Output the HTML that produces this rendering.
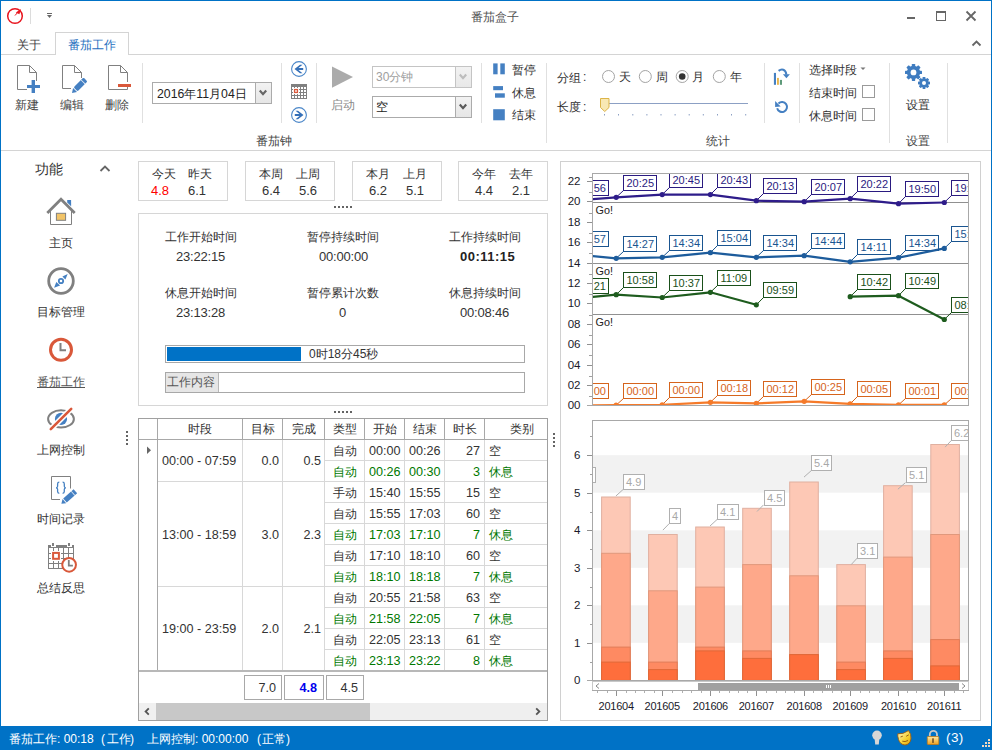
<!DOCTYPE html>
<html><head><meta charset="utf-8">
<style>
*{box-sizing:border-box}
html,body{margin:0;padding:0}
body{width:992px;height:750px;position:relative;overflow:hidden;background:#fff;font-family:"Liberation Sans",sans-serif;font-size:12px;color:#333}
.a{position:absolute;white-space:nowrap;line-height:14px}
.ln{position:absolute;background:#d4d4d4}
.box{position:absolute;border:1px solid #d6d6d6;background:#fff}
svg{position:absolute;overflow:visible}
.lbl{color:#444}
.num{font-size:12.6px}
</style></head><body>
<!-- window border -->
<div class="ln" style="left:0;top:0;width:992px;height:1px;background:#0072c6"></div>
<div class="ln" style="left:0;top:0;width:1px;height:750px;background:#0072c6"></div>
<div class="ln" style="left:991px;top:0;width:1px;height:750px;background:#0072c6"></div>

<!-- title bar -->
<svg style="left:0;top:0" width="60" height="32">
  <circle cx="15" cy="16" r="7.3" fill="none" stroke="#e8141e" stroke-width="1.5"/>
  <path d="M15 15.5 L18.5 11.5" stroke="#e8141e" stroke-width="1"/>
  <path d="M21 9 L15.8 12.4 L19.4 14.2 Z" fill="#e8141e"/>
  <rect x="30" y="8" width="1" height="16" fill="#dcdcdc"/>
  <rect x="47" y="13" width="5" height="1" fill="#666"/>
  <path d="M47 15 L52 15 L49.5 18 Z" fill="#666"/>
</svg>
<div class="a lbl" style="left:471px;top:10px;font-size:12px;color:#505050">番茄盒子</div>
<svg style="left:900px;top:5px" width="90" height="25">
  <rect x="7" y="12" width="8" height="2" fill="#666"/>
  <rect x="36.5" y="6.5" width="9" height="9" fill="none" stroke="#666" stroke-width="1"/>
  <rect x="36" y="6" width="10" height="2" fill="#666"/>
  <path d="M66.5 6.5 L75.5 15.5 M75.5 6.5 L66.5 15.5" stroke="#666" stroke-width="1.8"/>
</svg>

<!-- tabs -->
<div class="a" style="left:17px;top:38px;font-size:12px;color:#444">关于</div>
<div style="position:absolute;left:55px;top:32px;width:74px;height:23px;border:1px solid #d4d4d4;border-bottom:none;background:#fff"></div>
<div class="ln" style="left:1px;top:54px;width:54px;height:1px"></div>
<div class="ln" style="left:128px;top:54px;width:863px;height:1px"></div>
<div class="a" style="left:68px;top:38px;font-size:12px;color:#1f6fc0">番茄工作</div>
<svg style="left:970px;top:38px" width="14" height="10"><path d="M2.5 7.5 L6.5 3.5 L10.5 7.5" fill="none" stroke="#666" stroke-width="1.8"/></svg>

<!-- ribbon bottom -->
<div class="ln" style="left:1px;top:150px;width:990px;height:1px"></div>

<!-- ribbon group: 番茄钟 -->
<svg style="left:10px;top:60px" width="130" height="40">
  <!-- new -->
  <path d="M7.5 5.5 H19.5 L26.5 12.5 V21" fill="none" stroke="#808080" stroke-width="1"/>
  <path d="M19.5 5.5 V12.5 H26.5" fill="none" stroke="#808080" stroke-width="1"/>
  <path d="M7.5 5.5 V29.5 H17" fill="none" stroke="#808080" stroke-width="1"/>
  <rect x="17" y="25" width="13" height="3" fill="#4580c2"/>
  <rect x="21.6" y="20" width="3.4" height="13" fill="#4580c2"/>
  <!-- edit -->
  <path d="M52.5 5.5 H64.5 L71.5 12.5 V18" fill="none" stroke="#808080" stroke-width="1"/>
  <path d="M64.5 5.5 V12.5 H71.5" fill="none" stroke="#808080" stroke-width="1"/>
  <path d="M52.5 5.5 V28.5 H61" fill="none" stroke="#808080" stroke-width="1"/>
  <g transform="translate(62,33) rotate(-45)"><path d="M0 0 L4.3 -2.8 L4.3 2.8 Z" fill="#4580c2"/><rect x="5.1" y="-2.8" width="14" height="5.6" rx="1.2" fill="#4580c2"/><rect x="15.3" y="-2.8" width="0.8" height="5.6" fill="#fff" opacity="0.85"/></g>
  <!-- delete -->
  <path d="M98.5 5.5 H110.5 L117.5 12.5 V22" fill="none" stroke="#808080" stroke-width="1"/>
  <path d="M110.5 5.5 V12.5 H117.5" fill="none" stroke="#808080" stroke-width="1"/>
  <path d="M98.5 5.5 V29.5 H117.5 V27" fill="none" stroke="#808080" stroke-width="1"/>
  <rect x="108" y="24" width="13" height="3" fill="#d9583a"/>
</svg>
<div class="a" style="left:15px;top:98px;color:#444">新建</div>
<div class="a" style="left:60px;top:98px;color:#444">编辑</div>
<div class="a" style="left:105px;top:98px;color:#444">删除</div>
<div class="ln" style="left:142px;top:63px;width:1px;height:60px;background:#e0e0e0"></div>

<!-- date combo -->
<div class="box" style="left:152px;top:82px;width:120px;height:22px;border-color:#ababab"></div>
<div style="position:absolute;left:255px;top:83px;width:16px;height:20px;background:linear-gradient(#f2f2f2,#e6e6e6);border-left:1px solid #acacac"></div>
<svg style="left:255px;top:83px" width="16" height="20"><path d="M4.8 7.6 L8 11.2 L11.2 7.6" fill="none" stroke="#666" stroke-width="2.2"/></svg>
<div class="a" style="left:157px;top:87px;color:#222;font-size:12.3px">2016年11月04日</div>
<div class="ln" style="left:281px;top:63px;width:1px;height:60px;background:#e0e0e0"></div>
<svg style="left:290px;top:60px" width="18" height="64">
  <circle cx="9" cy="9" r="7.4" fill="none" stroke="#4a86c8" stroke-width="1.1"/>
  <path d="M4.5 9 L10 4.8 L12.5 4.8 L8.5 8 L13.2 8 L13.2 10 L8.5 10 L12.5 13.2 L10 13.2 Z" fill="#3570b8"/>
  <rect x="1" y="24" width="16" height="15" fill="#808080"/>
  <g fill="#fff"><rect x="2" y="27" width="2" height="2"/><rect x="2" y="30" width="2" height="2"/><rect x="2" y="33" width="2" height="2"/><rect x="2" y="36" width="2" height="2"/><rect x="5" y="27" width="2" height="2"/><rect x="5" y="30" width="2" height="2"/><rect x="5" y="33" width="2" height="2"/><rect x="5" y="36" width="2" height="2"/><rect x="8" y="27" width="2" height="2"/><rect x="8" y="30" width="2" height="2"/><rect x="8" y="33" width="2" height="2"/><rect x="8" y="36" width="2" height="2"/><rect x="11" y="27" width="2" height="2"/><rect x="11" y="30" width="2" height="2"/><rect x="11" y="33" width="2" height="2"/><rect x="11" y="36" width="2" height="2"/><rect x="14" y="27" width="2" height="2"/><rect x="14" y="30" width="2" height="2"/><rect x="14" y="33" width="2" height="2"/><rect x="14" y="36" width="2" height="2"/></g>
  <rect x="3" y="28" width="6" height="6" fill="#fff"/>
  <rect x="4.55" y="29.55" width="2.9" height="2.9" fill="#fff" stroke="#d9583a" stroke-width="1.3"/>
  <circle cx="9" cy="55" r="7.4" fill="none" stroke="#4a86c8" stroke-width="1.1"/>
  <path d="M13.5 55 L8 50.8 L5.5 50.8 L9.5 54 L4.8 54 L4.8 56 L9.5 56 L5.5 59.2 L8 59.2 Z" fill="#3570b8"/>
</svg>
<div class="ln" style="left:316px;top:63px;width:1px;height:60px;background:#e0e0e0"></div>

<!-- start -->
<svg style="left:330px;top:64px" width="26" height="26"><path d="M2 2.4 L23 13 L2 23.8 Z" fill="#ababab"/></svg>
<div class="a" style="left:331px;top:98px;color:#8a8a8a">启动</div>
<div class="box" style="left:372px;top:66px;width:100px;height:22px;border-color:#c4c4c4"></div>
<div style="position:absolute;left:455px;top:67px;width:16px;height:20px;background:linear-gradient(#f2f2f2,#e8e8e8);border-left:1px solid #c4c4c4"></div>
<svg style="left:455px;top:67px" width="16" height="20"><path d="M4.8 7.6 L8 11.2 L11.2 7.6" fill="none" stroke="#bdbdbd" stroke-width="2.2"/></svg>
<div class="a" style="left:376px;top:70px;color:#a0a0a0">30分钟</div>
<div class="box" style="left:372px;top:96px;width:100px;height:22px;border-color:#ababab"></div>
<div style="position:absolute;left:455px;top:97px;width:16px;height:20px;background:linear-gradient(#f2f2f2,#e6e6e6);border-left:1px solid #acacac"></div>
<svg style="left:455px;top:97px" width="16" height="20"><path d="M4.8 7.6 L8 11.2 L11.2 7.6" fill="none" stroke="#5a5a5a" stroke-width="2.2"/></svg>
<div class="a" style="left:376px;top:100px;color:#222">空</div>
<div class="ln" style="left:481px;top:63px;width:1px;height:60px;background:#e0e0e0"></div>
<svg style="left:490px;top:60px" width="20" height="64">
  <rect x="3.2" y="3.4" width="4.4" height="10.9" fill="#4580c2"/><rect x="10.3" y="3.4" width="4.5" height="10.9" fill="#4580c2"/>
  <rect x="3.2" y="26.1" width="9.8" height="4.1" fill="#4580c2"/><rect x="5" y="33.3" width="9.8" height="4.4" fill="#4580c2"/>
  <rect x="3.2" y="49.2" width="11.6" height="11.1" fill="#4580c2"/>
</svg>
<div class="a" style="left:512px;top:63px;color:#333">暂停</div>
<div class="a" style="left:512px;top:86px;color:#333">休息</div>
<div class="a" style="left:512px;top:108px;color:#333">结束</div>
<div class="ln" style="left:546px;top:63px;width:1px;height:80px;background:#e0e0e0"></div>
<div class="a" style="left:256px;top:134px;color:#444">番茄钟</div>

<!-- 统计 -->
<div class="a" style="left:557px;top:71px;color:#333">分组</div><div class="a" style="left:583px;top:70px;color:#333">:</div>
<div class="a" style="left:557px;top:100px;color:#333">长度</div><div class="a" style="left:583px;top:100px;color:#333">:</div>
<svg style="left:598px;top:66px" width="160" height="55">
  <circle cx="10.5" cy="10.5" r="6" fill="#fff" stroke="#a4a4a4" stroke-width="1"/>
  <circle cx="47.3" cy="10.5" r="6" fill="#fff" stroke="#a4a4a4" stroke-width="1"/>
  <circle cx="84.2" cy="10.5" r="6" fill="#fff" stroke="#a4a4a4" stroke-width="1"/>
  <circle cx="84.2" cy="10.5" r="3.3" fill="#333"/>
  <circle cx="121.3" cy="10.5" r="6" fill="#fff" stroke="#a4a4a4" stroke-width="1"/>
  <rect x="11" y="37" width="139" height="1" fill="#8ca0c4"/>
  <path d="M2.5 32.5 H11 V41.5 L6.75 45.5 L2.5 41.5 Z" fill="#f8e8b4" stroke="#dcb448" stroke-width="1"/>
  <g fill="#8ca0c4">
   <rect x="6" y="48" width="1" height="1.5"/><rect x="20" y="48" width="1" height="1.5"/><rect x="34.3" y="48" width="1" height="1.5"/><rect x="48.4" y="48" width="1" height="1.5"/><rect x="62.5" y="48" width="1" height="1.5"/><rect x="76.6" y="48" width="1" height="1.5"/><rect x="90.7" y="48" width="1" height="1.5"/><rect x="104.8" y="48" width="1" height="1.5"/><rect x="119" y="48" width="1" height="1.5"/><rect x="133" y="48" width="1" height="1.5"/><rect x="147.2" y="48" width="1" height="1.5"/>
  </g>
</svg>
<div class="a" style="left:619px;top:70px;color:#333">天</div>
<div class="a" style="left:656px;top:70px;color:#333">周</div>
<div class="a" style="left:692px;top:70px;color:#333">月</div>
<div class="a" style="left:730px;top:70px;color:#333">年</div>
<div class="ln" style="left:764px;top:63px;width:1px;height:60px;background:#e0e0e0"></div>
<svg style="left:770px;top:62px" width="26" height="56">
  <rect x="3.9" y="10.9" width="2.1" height="11.9" fill="#4580c2"/>
  <rect x="7" y="15.9" width="1.9" height="6.9" fill="#e8b44a"/>
  <rect x="9.9" y="17.9" width="2.1" height="4.9" fill="#5e9a7a"/>
  <path d="M8.6 8.9 C11.5 6.6 15.6 7 16.4 12.6" fill="none" stroke="#4580c2" stroke-width="2"/>
  <path d="M12.9 12.3 L19.9 12.3 L16.4 16.2 Z" fill="#4580c2"/>
  <path d="M7.15 46.2 A5 5 0 1 0 8.46 41.46" fill="none" stroke="#4580c2" stroke-width="2"/>
  <path d="M5.1 39.1 L5.1 45 L10.7 44.4 Z" fill="#4580c2"/>
</svg>
<div class="ln" style="left:799px;top:63px;width:1px;height:60px;background:#e0e0e0"></div>
<div class="a" style="left:809px;top:63px;color:#333">选择时段</div>
<svg style="left:860px;top:66px" width="8" height="6"><path d="M0.5 1.5 H5.5 L3 4 Z" fill="#777"/></svg>
<div class="a" style="left:809px;top:86px;color:#333">结束时间</div>
<div class="a" style="left:809px;top:109px;color:#333">休息时间</div>
<div class="box" style="left:862px;top:85px;width:13px;height:13px;border-color:#9a9a9a"></div>
<div class="box" style="left:862px;top:108px;width:13px;height:13px;border-color:#9a9a9a"></div>
<div class="ln" style="left:889px;top:63px;width:1px;height:80px;background:#e0e0e0"></div>
<div class="a" style="left:706px;top:134px;color:#444">统计</div>

<!-- 设置 -->
<svg style="left:898px;top:58px" width="40" height="40"><g transform="translate(15.5,14.4)" fill="#3f7cc0"><circle r="6.6"/><rect x="-1.7" y="-8.5" width="3.4" height="17.0" rx="0.6" transform="rotate(0)"/><rect x="-1.7" y="-8.5" width="3.4" height="17.0" rx="0.6" transform="rotate(45)"/><rect x="-1.7" y="-8.5" width="3.4" height="17.0" rx="0.6" transform="rotate(90)"/><rect x="-1.7" y="-8.5" width="3.4" height="17.0" rx="0.6" transform="rotate(135)"/></g><circle cx="15.5" cy="14.4" r="2.9" fill="#fff"/><circle cx="26" cy="25" r="6.6" fill="#fff"/><g transform="translate(26,25)" fill="#3f7cc0"><circle r="4.6"/><rect x="-1.4" y="-6" width="2.8" height="12" rx="0.6" transform="rotate(0)"/><rect x="-1.4" y="-6" width="2.8" height="12" rx="0.6" transform="rotate(45)"/><rect x="-1.4" y="-6" width="2.8" height="12" rx="0.6" transform="rotate(90)"/><rect x="-1.4" y="-6" width="2.8" height="12" rx="0.6" transform="rotate(135)"/></g><circle cx="26" cy="25" r="2.0" fill="#fff"/></svg>
<div class="a" style="left:906px;top:98px;color:#333">设置</div>
<div class="a" style="left:906px;top:134px;color:#444">设置</div>
<div class="ln" style="left:947px;top:63px;width:1px;height:80px;background:#e0e0e0"></div>

<!-- top line of content? -->
<!-- sidebar -->
<div class="a" style="left:35px;top:161px;font-size:14px;line-height:16px;color:#333">功能</div>
<svg style="left:97px;top:161px" width="16" height="14"><path d="M3.5 10 L8 5.5 L12.5 10" fill="none" stroke="#666" stroke-width="1.8"/></svg>
<svg style="left:40px;top:190px" width="44" height="400">
  <!-- home -->
  <path d="M7.3 23 L21 9.3 L34.7 23" fill="none" stroke="#808080" stroke-width="2.8"/>
  <path d="M27.2 10 H31.1 V16.3 L27.2 12.6 Z" fill="#4580c2"/>
  <path d="M10.5 18.5 V34.5 H31.5 V18.5" fill="none" stroke="#808080" stroke-width="1"/>
  <rect x="16.4" y="23.3" width="9.2" height="7" fill="#f2c468" stroke="#808080" stroke-width="1"/>
  <!-- compass -->
  <circle cx="21" cy="91" r="12.3" fill="none" stroke="#808080" stroke-width="2.8"/>
  <path d="M27.7 84.1 L22.4 86.4 L25.4 89.4 Z M14.1 97.7 L16.3 91.9 L20.1 95.6 Z" fill="#4580c2"/>
  <circle cx="21" cy="91" r="2.2" fill="#fff" stroke="#4580c2" stroke-width="1.8"/>
  <!-- clock -->
  <circle cx="21" cy="159.8" r="10.5" fill="none" stroke="#d9583a" stroke-width="3"/>
  <path d="M20.5 153 V160.3 H26" fill="none" stroke="#808080" stroke-width="2"/>
  <!-- eye -->
  <ellipse cx="21" cy="228.9" rx="12.9" ry="8.6" fill="none" stroke="#808080" stroke-width="2"/>
  <circle cx="21" cy="228.9" r="6.1" fill="#4580c2"/>
  <path d="M10.8 239.2 L31.2 218.8" stroke="#fff" stroke-width="5.5"/>
  <path d="M10.8 239.2 L31.2 218.8" stroke="#d9583a" stroke-width="2.6" stroke-linecap="round"/>
  <!-- doc with braces -->
  <path d="M11.5 286.5 H30.5 V298.5 M11.5 286.5 V309.5 H20" fill="none" stroke="#808080" stroke-width="1"/>
  <path d="M19.3 292.2 Q17.6 292.2 17.6 294 V296.3 Q17.6 297.8 16 297.8 Q17.6 297.8 17.6 299.3 V301.6 Q17.6 303.4 19.3 303.4 M22.6 292.2 Q24.3 292.2 24.3 294 V296.3 Q24.3 297.8 25.9 297.8 Q24.3 297.8 24.3 299.3 V301.6 Q24.3 303.4 22.6 303.4" fill="none" stroke="#4580c2" stroke-width="1.3"/>
  <g transform="translate(21.4,313.8) rotate(-42)"><path d="M0 0 L4 -2.7 L4 2.7 Z" fill="#4580c2"/><rect x="4.8" y="-2.7" width="14" height="5.4" fill="#4580c2"/><rect x="15.2" y="-2.7" width="0.8" height="5.4" fill="#fff" opacity="0.8"/></g>
  <!-- calendar -->
  <rect x="8.5" y="355.5" width="25" height="23" fill="#fff" stroke="#808080" stroke-width="1"/>
  <rect x="8" y="355" width="26" height="3" fill="#808080"/>
  <rect x="11" y="355" width="5" height="2" fill="#fff"/><rect x="27" y="355" width="5" height="2" fill="#fff"/>
  <rect x="12" y="353" width="2" height="3" fill="#808080"/><rect x="28" y="353" width="2" height="3" fill="#808080"/>
  <path d="M13.5 358 V378 M18.5 358 V378 M23.5 358 V378 M28.5 358 V378 M8.5 363.5 H33.5 M8.5 368.5 H33.5 M8.5 373.5 H33.5" stroke="#808080" stroke-width="1"/>
  <rect x="11" y="361" width="10" height="10" fill="#fff"/>
  <rect x="13.1" y="362.9" width="5.8" height="5.9" fill="#fff" stroke="#d9583a" stroke-width="2"/>
  <circle cx="29.1" cy="374.8" r="6.85" fill="#fff" stroke="#d9583a" stroke-width="2"/>
  <path d="M28.8 370 V375.6 H32.9" fill="none" stroke="#808080" stroke-width="1.8"/>
</svg>
<div class="a" style="left:49px;top:236px;color:#333">主页</div>
<div class="a" style="left:37px;top:305px;color:#333">目标管理</div>
<div class="a" style="left:37px;top:375px;color:#555;text-decoration:underline">番茄工作</div>
<div class="a" style="left:37px;top:443px;color:#333">上网控制</div>
<div class="a" style="left:37px;top:512px;color:#333">时间记录</div>
<div class="a" style="left:37px;top:581px;color:#333">总结反思</div>
<svg style="left:125px;top:430px" width="4" height="18"><g fill="#646464"><rect x="1" y="1" width="2" height="2"/><rect x="1" y="5" width="2" height="2"/><rect x="1" y="9" width="2" height="2"/><rect x="1" y="13" width="2" height="2"/></g></svg>

<!-- summary boxes -->
<div class="box" style="left:138px;top:161px;width:90px;height:40px"></div>
<div class="box" style="left:245px;top:161px;width:90px;height:40px"></div>
<div class="box" style="left:352px;top:161px;width:90px;height:40px"></div>
<div class="box" style="left:458px;top:161px;width:90px;height:40px"></div>
<div class="a" style="left:152px;top:167px;color:#333">今天</div>
<div class="a" style="left:188px;top:167px;color:#333">昨天</div>
<div class="a" style="left:259px;top:167px;color:#333">本周</div>
<div class="a" style="left:296px;top:167px;color:#333">上周</div>
<div class="a" style="left:366px;top:167px;color:#333">本月</div>
<div class="a" style="left:403px;top:167px;color:#333">上月</div>
<div class="a" style="left:472px;top:167px;color:#333">今年</div>
<div class="a" style="left:509px;top:167px;color:#333">去年</div>
<div class="a" style="left:151px;top:184px;font-size:13px;color:#ff0000">4.8</div>
<div class="a" style="left:188px;top:184px;font-size:13px;color:#333">6.1</div>
<div class="a" style="left:262px;top:184px;font-size:13px;color:#333">6.4</div>
<div class="a" style="left:299px;top:184px;font-size:13px;color:#333">5.6</div>
<div class="a" style="left:369px;top:184px;font-size:13px;color:#333">6.2</div>
<div class="a" style="left:406px;top:184px;font-size:13px;color:#333">5.1</div>
<div class="a" style="left:475px;top:184px;font-size:13px;color:#333">4.4</div>
<div class="a" style="left:512px;top:184px;font-size:13px;color:#333">2.1</div>
<svg style="left:333px;top:205px" width="20" height="3"><g fill="#646464"><rect x="1" y="1" width="2" height="2"/><rect x="5" y="1" width="2" height="2"/><rect x="9" y="1" width="2" height="2"/><rect x="13" y="1" width="2" height="2"/><rect x="17" y="1" width="2" height="2"/></g></svg>

<!-- timer panel -->
<div class="box" style="left:138px;top:213px;width:410px;height:193px"></div>
<div class="a" style="left:165px;top:230px;color:#333">工作开始时间</div>
<div class="a" style="left:307px;top:230px;color:#333">暂停持续时间</div>
<div class="a" style="left:449px;top:230px;color:#333">工作持续时间</div>
<div class="a" style="left:176px;top:250px;font-size:13px;color:#333;letter-spacing:-0.2px">23:22:15</div>
<div class="a" style="left:319px;top:250px;font-size:13px;color:#333;letter-spacing:-0.2px">00:00:00</div>
<div class="a" style="left:460px;top:250px;font-size:13px;color:#222;font-weight:bold;letter-spacing:0.5px">00:11:15</div>
<div class="a" style="left:165px;top:286px;color:#333">休息开始时间</div>
<div class="a" style="left:307px;top:286px;color:#333">暂停累计次数</div>
<div class="a" style="left:449px;top:286px;color:#333">休息持续时间</div>
<div class="a" style="left:176px;top:306px;font-size:13px;color:#333;letter-spacing:-0.2px">23:13:28</div>
<div class="a" style="left:339px;top:306px;font-size:13px;color:#333">0</div>
<div class="a" style="left:460px;top:306px;font-size:13px;color:#333;letter-spacing:-0.2px">00:08:46</div>
<div class="box" style="left:165px;top:345px;width:360px;height:18px;border-color:#a8a8a8"></div>
<div style="position:absolute;left:167px;top:347px;width:134px;height:14px;background:#0072c6"></div>
<div class="a" style="left:309px;top:347px;color:#333">0时18分45秒</div>
<div class="box" style="left:165px;top:372px;width:360px;height:21px;border-color:#a8a8a8"></div>
<div style="position:absolute;left:166px;top:373px;width:53px;height:19px;background:#e6e6e6;border-right:1px solid #b8b8b8"></div>
<div class="a" style="left:167px;top:375px;color:#555">工作内容</div>
<svg style="left:333px;top:410px" width="20" height="3"><g fill="#646464"><rect x="1" y="1" width="2" height="2"/><rect x="5" y="1" width="2" height="2"/><rect x="9" y="1" width="2" height="2"/><rect x="13" y="1" width="2" height="2"/><rect x="17" y="1" width="2" height="2"/></g></svg>

<!--GRID-->
<div style="position:absolute;left:138px;top:418px;width:410px;height:303px;border:1px solid #a0a0a0;background:#fff"></div>
<div class="ln" style="left:139px;top:439px;width:408px;height:1px;background:#a8a8a8"></div>
<div class="ln" style="left:157px;top:419px;width:1px;height:20px;background:#a8a8a8"></div>
<div class="ln" style="left:242px;top:419px;width:1px;height:20px;background:#a8a8a8"></div>
<div class="ln" style="left:282px;top:419px;width:1px;height:20px;background:#a8a8a8"></div>
<div class="ln" style="left:324px;top:419px;width:1px;height:20px;background:#a8a8a8"></div>
<div class="ln" style="left:364px;top:419px;width:1px;height:20px;background:#a8a8a8"></div>
<div class="ln" style="left:404px;top:419px;width:1px;height:20px;background:#a8a8a8"></div>
<div class="ln" style="left:444px;top:419px;width:1px;height:20px;background:#a8a8a8"></div>
<div class="ln" style="left:484px;top:419px;width:1px;height:20px;background:#a8a8a8"></div>
<div class="ln" style="left:157px;top:440px;width:1px;height:231px;background:#a8a8a8"></div>
<div class="ln" style="left:242px;top:440px;width:1px;height:231px;background:#d8d8d8"></div>
<div class="ln" style="left:282px;top:440px;width:1px;height:231px;background:#d8d8d8"></div>
<div class="ln" style="left:324px;top:440px;width:1px;height:231px;background:#d8d8d8"></div>
<div class="ln" style="left:364px;top:440px;width:1px;height:231px;background:#d8d8d8"></div>
<div class="ln" style="left:404px;top:440px;width:1px;height:231px;background:#d8d8d8"></div>
<div class="ln" style="left:444px;top:440px;width:1px;height:231px;background:#d8d8d8"></div>
<div class="ln" style="left:484px;top:440px;width:1px;height:231px;background:#d8d8d8"></div>
<div class="ln" style="left:325px;top:460px;width:222px;height:1px;background:#d8d8d8"></div>
<div class="ln" style="left:158px;top:481px;width:389px;height:1px;background:#d8d8d8"></div>
<div class="ln" style="left:325px;top:502px;width:222px;height:1px;background:#d8d8d8"></div>
<div class="ln" style="left:325px;top:523px;width:222px;height:1px;background:#d8d8d8"></div>
<div class="ln" style="left:325px;top:544px;width:222px;height:1px;background:#d8d8d8"></div>
<div class="ln" style="left:325px;top:565px;width:222px;height:1px;background:#d8d8d8"></div>
<div class="ln" style="left:158px;top:586px;width:389px;height:1px;background:#d8d8d8"></div>
<div class="ln" style="left:325px;top:607px;width:222px;height:1px;background:#d8d8d8"></div>
<div class="ln" style="left:325px;top:628px;width:222px;height:1px;background:#d8d8d8"></div>
<div class="ln" style="left:325px;top:649px;width:222px;height:1px;background:#d8d8d8"></div>
<div class="ln" style="left:139px;top:670px;width:408px;height:2px;background:#b8b8b8"></div>
<div class="a" style="left:158px;top:422px;width:84px;text-align:center;color:#333">时段</div>
<div class="a" style="left:243px;top:422px;width:39px;text-align:center;color:#333">目标</div>
<div class="a" style="left:283px;top:422px;width:41px;text-align:center;color:#333">完成</div>
<div class="a" style="left:325px;top:422px;width:39px;text-align:center;color:#333">类型</div>
<div class="a" style="left:365px;top:422px;width:39px;text-align:center;color:#333">开始</div>
<div class="a" style="left:405px;top:422px;width:39px;text-align:center;color:#333">结束</div>
<div class="a" style="left:445px;top:422px;width:39px;text-align:center;color:#333">时长</div>
<div class="a" style="left:485px;top:422px;width:49px;text-align:right;color:#333">类别</div>
<svg style="left:146px;top:446px" width="6" height="9"><path d="M1 0.5 L5 4.3 L1 8 Z" fill="#666"/></svg>
<div class="a num" style="left:162px;top:454px;color:#333">00:00 - 07:59</div>
<div class="a num" style="left:243px;top:454px;width:36px;text-align:right;color:#333">0.0</div>
<div class="a num" style="left:283px;top:454px;width:38px;text-align:right;color:#333">0.5</div>
<div class="a num" style="left:162px;top:527.5px;color:#333">13:00 - 18:59</div>
<div class="a num" style="left:243px;top:527.5px;width:36px;text-align:right;color:#333">3.0</div>
<div class="a num" style="left:283px;top:527.5px;width:38px;text-align:right;color:#333">2.3</div>
<div class="a num" style="left:162px;top:622px;color:#333">19:00 - 23:59</div>
<div class="a num" style="left:243px;top:622px;width:36px;text-align:right;color:#333">2.0</div>
<div class="a num" style="left:283px;top:622px;width:38px;text-align:right;color:#333">2.1</div>
<div class="a" style="left:333px;top:444px;color:#333">自动</div>
<div class="a num" style="left:369px;top:444px;color:#333">00:00</div>
<div class="a num" style="left:409px;top:444px;color:#333">00:26</div>
<div class="a num" style="left:445px;top:444px;width:35px;text-align:right;color:#333">27</div>
<div class="a" style="left:489px;top:444px;color:#333">空</div>
<div class="a" style="left:333px;top:465px;color:#007800">自动</div>
<div class="a num" style="left:369px;top:465px;color:#007800">00:26</div>
<div class="a num" style="left:409px;top:465px;color:#007800">00:30</div>
<div class="a num" style="left:445px;top:465px;width:35px;text-align:right;color:#007800">3</div>
<div class="a" style="left:489px;top:465px;color:#007800">休息</div>
<div class="a" style="left:333px;top:486px;color:#333">手动</div>
<div class="a num" style="left:369px;top:486px;color:#333">15:40</div>
<div class="a num" style="left:409px;top:486px;color:#333">15:55</div>
<div class="a num" style="left:445px;top:486px;width:35px;text-align:right;color:#333">15</div>
<div class="a" style="left:489px;top:486px;color:#333">空</div>
<div class="a" style="left:333px;top:507px;color:#333">自动</div>
<div class="a num" style="left:369px;top:507px;color:#333">15:55</div>
<div class="a num" style="left:409px;top:507px;color:#333">17:03</div>
<div class="a num" style="left:445px;top:507px;width:35px;text-align:right;color:#333">60</div>
<div class="a" style="left:489px;top:507px;color:#333">空</div>
<div class="a" style="left:333px;top:528px;color:#007800">自动</div>
<div class="a num" style="left:369px;top:528px;color:#007800">17:03</div>
<div class="a num" style="left:409px;top:528px;color:#007800">17:10</div>
<div class="a num" style="left:445px;top:528px;width:35px;text-align:right;color:#007800">7</div>
<div class="a" style="left:489px;top:528px;color:#007800">休息</div>
<div class="a" style="left:333px;top:549px;color:#333">自动</div>
<div class="a num" style="left:369px;top:549px;color:#333">17:10</div>
<div class="a num" style="left:409px;top:549px;color:#333">18:10</div>
<div class="a num" style="left:445px;top:549px;width:35px;text-align:right;color:#333">60</div>
<div class="a" style="left:489px;top:549px;color:#333">空</div>
<div class="a" style="left:333px;top:570px;color:#007800">自动</div>
<div class="a num" style="left:369px;top:570px;color:#007800">18:10</div>
<div class="a num" style="left:409px;top:570px;color:#007800">18:18</div>
<div class="a num" style="left:445px;top:570px;width:35px;text-align:right;color:#007800">7</div>
<div class="a" style="left:489px;top:570px;color:#007800">休息</div>
<div class="a" style="left:333px;top:591px;color:#333">自动</div>
<div class="a num" style="left:369px;top:591px;color:#333">20:55</div>
<div class="a num" style="left:409px;top:591px;color:#333">21:58</div>
<div class="a num" style="left:445px;top:591px;width:35px;text-align:right;color:#333">63</div>
<div class="a" style="left:489px;top:591px;color:#333">空</div>
<div class="a" style="left:333px;top:612px;color:#007800">自动</div>
<div class="a num" style="left:369px;top:612px;color:#007800">21:58</div>
<div class="a num" style="left:409px;top:612px;color:#007800">22:05</div>
<div class="a num" style="left:445px;top:612px;width:35px;text-align:right;color:#007800">7</div>
<div class="a" style="left:489px;top:612px;color:#007800">休息</div>
<div class="a" style="left:333px;top:633px;color:#333">自动</div>
<div class="a num" style="left:369px;top:633px;color:#333">22:05</div>
<div class="a num" style="left:409px;top:633px;color:#333">23:13</div>
<div class="a num" style="left:445px;top:633px;width:35px;text-align:right;color:#333">61</div>
<div class="a" style="left:489px;top:633px;color:#333">空</div>
<div class="a" style="left:333px;top:654px;color:#007800">自动</div>
<div class="a num" style="left:369px;top:654px;color:#007800">23:13</div>
<div class="a num" style="left:409px;top:654px;color:#007800">23:22</div>
<div class="a num" style="left:445px;top:654px;width:35px;text-align:right;color:#007800">8</div>
<div class="a" style="left:489px;top:654px;color:#007800">休息</div>
<div class="box" style="left:244px;top:675px;width:38px;height:25px;border-color:#a8a8a8"></div>
<div class="box" style="left:284px;top:675px;width:40px;height:25px;border-color:#a8a8a8"></div>
<div class="box" style="left:326px;top:675px;width:38px;height:25px;border-color:#a8a8a8"></div>
<div class="a num" style="left:244px;top:681px;width:32px;text-align:right;color:#333">7.0</div>
<div class="a num" style="left:283px;top:681px;width:34px;text-align:right;color:#0000ee;font-weight:bold">4.8</div>
<div class="a num" style="left:326px;top:681px;width:32px;text-align:right;color:#333">4.5</div>
<div style="position:absolute;left:139px;top:703px;width:408px;height:17px;background:#efefef"></div>
<div style="position:absolute;left:139px;top:703px;width:17px;height:17px;background:#f0f0f0"></div>
<div style="position:absolute;left:156px;top:703px;width:214px;height:17px;background:#c8c8c8"></div>
<svg style="left:139px;top:703px" width="408" height="17"><path d="M9.8 5.3 L6.6 8.5 L9.8 11.7" fill="none" stroke="#555" stroke-width="1.8"/><path d="M397.2 5.3 L400.4 8.5 L397.2 11.7" fill="none" stroke="#555" stroke-width="1.8"/></svg>
<svg style="left:552px;top:430px" width="4" height="18"><g fill="#646464"><rect x="1" y="3" width="2" height="2"/><rect x="1" y="7" width="2" height="2"/><rect x="1" y="11" width="2" height="2"/><rect x="1" y="15" width="2" height="2"/></g></svg>
<!--/GRID-->
<!--CHART-->
<svg style="left:0;top:0" width="992" height="750" font-family="Liberation Sans">
<rect x="560.5" y="161.5" width="420" height="559" fill="#fff" stroke="#d0d0d0"/>
<rect x="592.5" y="173.5" width="376" height="232" fill="#fff" stroke="#a8a8a8"/>
<line x1="592" y1="202.5" x2="968" y2="202.5" stroke="#909090"/>
<line x1="592" y1="263.5" x2="968" y2="263.5" stroke="#909090"/>
<line x1="592" y1="314.5" x2="968" y2="314.5" stroke="#909090"/>
<line x1="587" y1="405.5" x2="592" y2="405.5" stroke="#909090"/>
<line x1="589" y1="396.5" x2="592" y2="396.5" stroke="#a0a0a0"/>
<line x1="587" y1="385.5" x2="592" y2="385.5" stroke="#909090"/>
<line x1="589" y1="376.5" x2="592" y2="376.5" stroke="#a0a0a0"/>
<line x1="587" y1="365.5" x2="592" y2="365.5" stroke="#909090"/>
<line x1="589" y1="355.5" x2="592" y2="355.5" stroke="#a0a0a0"/>
<line x1="587" y1="344.5" x2="592" y2="344.5" stroke="#909090"/>
<line x1="589" y1="335.5" x2="592" y2="335.5" stroke="#a0a0a0"/>
<line x1="587" y1="324.5" x2="592" y2="324.5" stroke="#909090"/>
<line x1="589" y1="315.5" x2="592" y2="315.5" stroke="#a0a0a0"/>
<line x1="587" y1="303.5" x2="592" y2="303.5" stroke="#909090"/>
<line x1="589" y1="294.5" x2="592" y2="294.5" stroke="#a0a0a0"/>
<line x1="587" y1="283.5" x2="592" y2="283.5" stroke="#909090"/>
<line x1="589" y1="274.5" x2="592" y2="274.5" stroke="#a0a0a0"/>
<line x1="587" y1="263.5" x2="592" y2="263.5" stroke="#909090"/>
<line x1="589" y1="253.5" x2="592" y2="253.5" stroke="#a0a0a0"/>
<line x1="587" y1="242.5" x2="592" y2="242.5" stroke="#909090"/>
<line x1="589" y1="233.5" x2="592" y2="233.5" stroke="#a0a0a0"/>
<line x1="587" y1="222.5" x2="592" y2="222.5" stroke="#909090"/>
<line x1="589" y1="213.5" x2="592" y2="213.5" stroke="#a0a0a0"/>
<line x1="587" y1="201.5" x2="592" y2="201.5" stroke="#909090"/>
<line x1="589" y1="192.5" x2="592" y2="192.5" stroke="#a0a0a0"/>
<line x1="587" y1="181.5" x2="592" y2="181.5" stroke="#909090"/>
<line x1="589" y1="177.5" x2="592" y2="177.5" stroke="#a0a0a0"/>
<text x="580.5" y="409.4" font-size="11.5" text-anchor="end" fill="#1a1a2a">00</text>
<text x="580.5" y="389.0" font-size="11.5" text-anchor="end" fill="#1a1a2a">02</text>
<text x="580.5" y="368.6" font-size="11.5" text-anchor="end" fill="#1a1a2a">04</text>
<text x="580.5" y="348.2" font-size="11.5" text-anchor="end" fill="#1a1a2a">06</text>
<text x="580.5" y="327.8" font-size="11.5" text-anchor="end" fill="#1a1a2a">08</text>
<text x="580.5" y="307.4" font-size="11.5" text-anchor="end" fill="#1a1a2a">10</text>
<text x="580.5" y="287.0" font-size="11.5" text-anchor="end" fill="#1a1a2a">12</text>
<text x="580.5" y="266.6" font-size="11.5" text-anchor="end" fill="#1a1a2a">14</text>
<text x="580.5" y="246.2" font-size="11.5" text-anchor="end" fill="#1a1a2a">16</text>
<text x="580.5" y="225.8" font-size="11.5" text-anchor="end" fill="#1a1a2a">18</text>
<text x="580.5" y="205.4" font-size="11.5" text-anchor="end" fill="#1a1a2a">20</text>
<text x="580.5" y="185.0" font-size="11.5" text-anchor="end" fill="#1a1a2a">22</text>
<text x="595.5" y="214.3" font-size="10.8" fill="#222">Go!</text>
<text x="595.5" y="275.2" font-size="10.8" fill="#222">Go!</text>
<text x="595.5" y="326.1" font-size="10.8" fill="#222">Go!</text>
<defs><clipPath id="lc"><rect x="593" y="174" width="375" height="231"/></clipPath><clipPath id="bc"><rect x="593" y="421" width="375" height="259"/></clipPath></defs>
<g clip-path="url(#lc)">
<line x1="616.2" y1="197.3" x2="623.5" y2="190.5" stroke="#2a1a80" stroke-width="1"/>
<rect x="623.5" y="175.5" width="33" height="15" fill="#fff" stroke="#2a1a80" stroke-width="1"/>
<text x="626.5" y="187.3" font-size="11" fill="#2a1a80">20:25</text>
<line x1="662.2" y1="194.6" x2="669.5" y2="187.5" stroke="#2a1a80" stroke-width="1"/>
<rect x="669.5" y="172.5" width="33" height="15" fill="#fff" stroke="#2a1a80" stroke-width="1"/>
<text x="672.5" y="184.3" font-size="11" fill="#2a1a80">20:45</text>
<line x1="710.4" y1="194.6" x2="717.5" y2="187.5" stroke="#2a1a80" stroke-width="1"/>
<rect x="717.5" y="172.5" width="33" height="15" fill="#fff" stroke="#2a1a80" stroke-width="1"/>
<text x="720.5" y="184.3" font-size="11" fill="#2a1a80">20:43</text>
<line x1="756.3" y1="200.7" x2="763.5" y2="193.5" stroke="#2a1a80" stroke-width="1"/>
<rect x="763.5" y="178.5" width="33" height="15" fill="#fff" stroke="#2a1a80" stroke-width="1"/>
<text x="766.5" y="190.3" font-size="11" fill="#2a1a80">20:13</text>
<line x1="804.2" y1="201.7" x2="811.5" y2="194.5" stroke="#2a1a80" stroke-width="1"/>
<rect x="811.5" y="179.5" width="33" height="15" fill="#fff" stroke="#2a1a80" stroke-width="1"/>
<text x="814.5" y="191.3" font-size="11" fill="#2a1a80">20:07</text>
<line x1="850.2" y1="198.7" x2="857.5" y2="191.5" stroke="#2a1a80" stroke-width="1"/>
<rect x="857.5" y="176.5" width="33" height="15" fill="#fff" stroke="#2a1a80" stroke-width="1"/>
<text x="860.5" y="188.3" font-size="11" fill="#2a1a80">20:22</text>
<line x1="898.5" y1="203.7" x2="905.5" y2="196.5" stroke="#2a1a80" stroke-width="1"/>
<rect x="905.5" y="181.5" width="33" height="15" fill="#fff" stroke="#2a1a80" stroke-width="1"/>
<text x="908.5" y="193.3" font-size="11" fill="#2a1a80">19:50</text>
<line x1="944.3" y1="202.5" x2="951.5" y2="195.5" stroke="#2a1a80" stroke-width="1"/>
<rect x="951.5" y="180.5" width="33" height="15" fill="#fff" stroke="#2a1a80" stroke-width="1"/>
<text x="954.5" y="192.3" font-size="11" fill="#2a1a80">19:</text>
<polyline points="592,199.3 616.2,197.3 662.2,194.6 710.4,194.6 756.3,200.7 804.2,201.7 850.2,198.7 898.5,203.7 944.3,202.5" fill="none" stroke="#2e1c8a" stroke-width="2.2" stroke-linejoin="round"/>
<circle cx="616.2" cy="197.3" r="2.6" fill="#2e1c8a"/>
<circle cx="662.2" cy="194.6" r="2.6" fill="#2e1c8a"/>
<circle cx="710.4" cy="194.6" r="2.6" fill="#2e1c8a"/>
<circle cx="756.3" cy="200.7" r="2.6" fill="#2e1c8a"/>
<circle cx="804.2" cy="201.7" r="2.6" fill="#2e1c8a"/>
<circle cx="850.2" cy="198.7" r="2.6" fill="#2e1c8a"/>
<circle cx="898.5" cy="203.7" r="2.6" fill="#2e1c8a"/>
<circle cx="944.3" cy="202.5" r="2.6" fill="#2e1c8a"/>
<line x1="616.2" y1="258.3" x2="623.5" y2="251.5" stroke="#1a5590" stroke-width="1"/>
<rect x="623.5" y="236.5" width="33" height="15" fill="#fff" stroke="#1a5590" stroke-width="1"/>
<text x="626.5" y="248.3" font-size="11" fill="#1a5590">14:27</text>
<line x1="662.2" y1="257.3" x2="669.5" y2="250.5" stroke="#1a5590" stroke-width="1"/>
<rect x="669.5" y="235.5" width="33" height="15" fill="#fff" stroke="#1a5590" stroke-width="1"/>
<text x="672.5" y="247.3" font-size="11" fill="#1a5590">14:34</text>
<line x1="710.4" y1="252.7" x2="717.5" y2="245.5" stroke="#1a5590" stroke-width="1"/>
<rect x="717.5" y="230.5" width="33" height="15" fill="#fff" stroke="#1a5590" stroke-width="1"/>
<text x="720.5" y="242.3" font-size="11" fill="#1a5590">15:04</text>
<line x1="756.3" y1="257.3" x2="763.5" y2="250.5" stroke="#1a5590" stroke-width="1"/>
<rect x="763.5" y="235.5" width="33" height="15" fill="#fff" stroke="#1a5590" stroke-width="1"/>
<text x="766.5" y="247.3" font-size="11" fill="#1a5590">14:34</text>
<line x1="804.2" y1="255.7" x2="811.5" y2="248.5" stroke="#1a5590" stroke-width="1"/>
<rect x="811.5" y="233.5" width="33" height="15" fill="#fff" stroke="#1a5590" stroke-width="1"/>
<text x="814.5" y="245.3" font-size="11" fill="#1a5590">14:44</text>
<line x1="850.2" y1="261.8" x2="857.5" y2="254.5" stroke="#1a5590" stroke-width="1"/>
<rect x="857.5" y="239.5" width="33" height="15" fill="#fff" stroke="#1a5590" stroke-width="1"/>
<text x="860.5" y="251.3" font-size="11" fill="#1a5590">14:11</text>
<line x1="898.5" y1="257.7" x2="905.5" y2="250.5" stroke="#1a5590" stroke-width="1"/>
<rect x="905.5" y="235.5" width="33" height="15" fill="#fff" stroke="#1a5590" stroke-width="1"/>
<text x="908.5" y="247.3" font-size="11" fill="#1a5590">14:34</text>
<line x1="944.3" y1="248.4" x2="951.5" y2="241.5" stroke="#1a5590" stroke-width="1"/>
<rect x="951.5" y="226.5" width="33" height="15" fill="#fff" stroke="#1a5590" stroke-width="1"/>
<text x="954.5" y="238.3" font-size="11" fill="#1a5590">15:</text>
<polyline points="592,256.1 616.2,258.3 662.2,257.3 710.4,252.7 756.3,257.3 804.2,255.7 850.2,261.8 898.5,257.7 944.3,248.4" fill="none" stroke="#1d5c9c" stroke-width="2.2" stroke-linejoin="round"/>
<circle cx="616.2" cy="258.3" r="2.6" fill="#1d5c9c"/>
<circle cx="662.2" cy="257.3" r="2.6" fill="#1d5c9c"/>
<circle cx="710.4" cy="252.7" r="2.6" fill="#1d5c9c"/>
<circle cx="756.3" cy="257.3" r="2.6" fill="#1d5c9c"/>
<circle cx="804.2" cy="255.7" r="2.6" fill="#1d5c9c"/>
<circle cx="850.2" cy="261.8" r="2.6" fill="#1d5c9c"/>
<circle cx="898.5" cy="257.7" r="2.6" fill="#1d5c9c"/>
<circle cx="944.3" cy="248.4" r="2.6" fill="#1d5c9c"/>
<line x1="616.2" y1="294.7" x2="623.5" y2="287.5" stroke="#1a501a" stroke-width="1"/>
<rect x="623.5" y="272.5" width="33" height="15" fill="#fff" stroke="#1a501a" stroke-width="1"/>
<text x="626.5" y="284.3" font-size="11" fill="#1a501a">10:58</text>
<line x1="662.2" y1="297.5" x2="669.5" y2="290.5" stroke="#1a501a" stroke-width="1"/>
<rect x="669.5" y="275.5" width="33" height="15" fill="#fff" stroke="#1a501a" stroke-width="1"/>
<text x="672.5" y="287.3" font-size="11" fill="#1a501a">10:37</text>
<line x1="710.4" y1="292.3" x2="717.5" y2="285.5" stroke="#1a501a" stroke-width="1"/>
<rect x="717.5" y="270.5" width="33" height="15" fill="#fff" stroke="#1a501a" stroke-width="1"/>
<text x="720.5" y="282.3" font-size="11" fill="#1a501a">11:09</text>
<line x1="756.3" y1="304.8" x2="763.5" y2="297.5" stroke="#1a501a" stroke-width="1"/>
<rect x="763.5" y="282.5" width="33" height="15" fill="#fff" stroke="#1a501a" stroke-width="1"/>
<text x="766.5" y="294.3" font-size="11" fill="#1a501a">09:59</text>
<line x1="850.2" y1="296.7" x2="857.5" y2="289.5" stroke="#1a501a" stroke-width="1"/>
<rect x="857.5" y="274.5" width="33" height="15" fill="#fff" stroke="#1a501a" stroke-width="1"/>
<text x="860.5" y="286.3" font-size="11" fill="#1a501a">10:42</text>
<line x1="898.5" y1="295.7" x2="905.5" y2="288.5" stroke="#1a501a" stroke-width="1"/>
<rect x="905.5" y="273.5" width="33" height="15" fill="#fff" stroke="#1a501a" stroke-width="1"/>
<text x="908.5" y="285.3" font-size="11" fill="#1a501a">10:49</text>
<line x1="944.3" y1="319.5" x2="951.5" y2="312.5" stroke="#1a501a" stroke-width="1"/>
<rect x="951.5" y="297.5" width="33" height="15" fill="#fff" stroke="#1a501a" stroke-width="1"/>
<text x="954.5" y="309.3" font-size="11" fill="#1a501a">08:</text>
<polyline points="592,296.9 616.2,294.7 662.2,297.5 710.4,292.3 756.3,304.8" fill="none" stroke="#1e5c1e" stroke-width="2.2" stroke-linejoin="round"/>
<polyline points="850.2,296.7 898.5,295.7 944.3,319.5" fill="none" stroke="#1e5c1e" stroke-width="2.2" stroke-linejoin="round"/>
<circle cx="616.2" cy="294.7" r="2.6" fill="#1e5c1e"/>
<circle cx="662.2" cy="297.5" r="2.6" fill="#1e5c1e"/>
<circle cx="710.4" cy="292.3" r="2.6" fill="#1e5c1e"/>
<circle cx="756.3" cy="304.8" r="2.6" fill="#1e5c1e"/>
<circle cx="850.2" cy="296.7" r="2.6" fill="#1e5c1e"/>
<circle cx="898.5" cy="295.7" r="2.6" fill="#1e5c1e"/>
<circle cx="944.3" cy="319.5" r="2.6" fill="#1e5c1e"/>
<line x1="616.2" y1="405.1" x2="623.5" y2="398.5" stroke="#d6641c" stroke-width="1"/>
<rect x="623.5" y="383.5" width="33" height="15" fill="#fff" stroke="#d6641c" stroke-width="1"/>
<text x="626.5" y="395.3" font-size="11" fill="#d6641c">00:00</text>
<line x1="662.2" y1="404.8" x2="669.5" y2="397.5" stroke="#d6641c" stroke-width="1"/>
<rect x="669.5" y="382.5" width="33" height="15" fill="#fff" stroke="#d6641c" stroke-width="1"/>
<text x="672.5" y="394.3" font-size="11" fill="#d6641c">00:00</text>
<line x1="710.4" y1="402.3" x2="717.5" y2="395.5" stroke="#d6641c" stroke-width="1"/>
<rect x="717.5" y="380.5" width="33" height="15" fill="#fff" stroke="#d6641c" stroke-width="1"/>
<text x="720.5" y="392.3" font-size="11" fill="#d6641c">00:18</text>
<line x1="756.3" y1="403.4" x2="763.5" y2="396.5" stroke="#d6641c" stroke-width="1"/>
<rect x="763.5" y="381.5" width="33" height="15" fill="#fff" stroke="#d6641c" stroke-width="1"/>
<text x="766.5" y="393.3" font-size="11" fill="#d6641c">00:12</text>
<line x1="804.2" y1="401.3" x2="811.5" y2="394.5" stroke="#d6641c" stroke-width="1"/>
<rect x="811.5" y="379.5" width="33" height="15" fill="#fff" stroke="#d6641c" stroke-width="1"/>
<text x="814.5" y="391.3" font-size="11" fill="#d6641c">00:25</text>
<line x1="850.2" y1="403.8" x2="857.5" y2="396.5" stroke="#d6641c" stroke-width="1"/>
<rect x="857.5" y="381.5" width="33" height="15" fill="#fff" stroke="#d6641c" stroke-width="1"/>
<text x="860.5" y="393.3" font-size="11" fill="#d6641c">00:05</text>
<line x1="898.5" y1="404.9" x2="905.5" y2="398.5" stroke="#d6641c" stroke-width="1"/>
<rect x="905.5" y="383.5" width="33" height="15" fill="#fff" stroke="#d6641c" stroke-width="1"/>
<text x="908.5" y="395.3" font-size="11" fill="#d6641c">00:01</text>
<line x1="944.3" y1="404.9" x2="951.5" y2="398.5" stroke="#d6641c" stroke-width="1"/>
<rect x="951.5" y="383.5" width="33" height="15" fill="#fff" stroke="#d6641c" stroke-width="1"/>
<text x="954.5" y="395.3" font-size="11" fill="#d6641c">00:</text>
<polyline points="592,405.3 616.2,405.1 662.2,404.8 710.4,402.3 756.3,403.4 804.2,401.3 850.2,403.8 898.5,404.9 944.3,404.9" fill="none" stroke="#f57a2a" stroke-width="2.2" stroke-linejoin="round"/>
<circle cx="616.2" cy="405.1" r="2.6" fill="#f57a2a"/>
<circle cx="662.2" cy="404.8" r="2.6" fill="#f57a2a"/>
<circle cx="710.4" cy="402.3" r="2.6" fill="#f57a2a"/>
<circle cx="756.3" cy="403.4" r="2.6" fill="#f57a2a"/>
<circle cx="804.2" cy="401.3" r="2.6" fill="#f57a2a"/>
<circle cx="850.2" cy="403.8" r="2.6" fill="#f57a2a"/>
<circle cx="898.5" cy="404.9" r="2.6" fill="#f57a2a"/>
<circle cx="944.3" cy="404.9" r="2.6" fill="#f57a2a"/>
</g>
<g clip-path="url(#lc)">
<rect x="575.5" y="180.5" width="33" height="15" fill="#fff" stroke="#2a1a80"/>
<text x="606" y="192.3" font-size="11" text-anchor="end" fill="#2a1a80">56</text>
<rect x="575.5" y="231.5" width="33" height="15" fill="#fff" stroke="#1a5590"/>
<text x="606" y="243.3" font-size="11" text-anchor="end" fill="#1a5590">57</text>
<rect x="575.5" y="278.5" width="33" height="15" fill="#fff" stroke="#1a501a"/>
<text x="606" y="290.3" font-size="11" text-anchor="end" fill="#1a501a">21</text>
<rect x="575.5" y="383.5" width="33" height="15" fill="#fff" stroke="#d6641c"/>
<text x="606" y="395.3" font-size="11" text-anchor="end" fill="#d6641c">00</text>
</g>
<line x1="592.5" y1="173" x2="592.5" y2="406" stroke="#a8a8a8"/>
<line x1="968.5" y1="173" x2="968.5" y2="406" stroke="#a8a8a8"/>
<line x1="587" y1="405.5" x2="969" y2="405.5" stroke="#a8a8a8"/>
<rect x="592.5" y="420.5" width="376" height="260" fill="#fff" stroke="#a8a8a8"/>
<rect x="593" y="605.3" width="375" height="37.5" fill="#f2f2f2"/>
<rect x="593" y="530.3" width="375" height="37.5" fill="#f2f2f2"/>
<rect x="593" y="455.2" width="375" height="37.5" fill="#f2f2f2"/>
<line x1="587" y1="680.5" x2="592" y2="680.5" stroke="#909090"/>
<text x="580.5" y="684.4" font-size="11.5" text-anchor="end" fill="#1a1a2a">0</text>
<line x1="590" y1="662.5" x2="592" y2="662.5" stroke="#a0a0a0"/>
<line x1="587" y1="643.5" x2="592" y2="643.5" stroke="#909090"/>
<text x="580.5" y="646.9" font-size="11.5" text-anchor="end" fill="#1a1a2a">1</text>
<line x1="590" y1="624.5" x2="592" y2="624.5" stroke="#a0a0a0"/>
<line x1="587" y1="605.5" x2="592" y2="605.5" stroke="#909090"/>
<text x="580.5" y="609.3" font-size="11.5" text-anchor="end" fill="#1a1a2a">2</text>
<line x1="590" y1="587.5" x2="592" y2="587.5" stroke="#a0a0a0"/>
<line x1="587" y1="568.5" x2="592" y2="568.5" stroke="#909090"/>
<text x="580.5" y="571.8" font-size="11.5" text-anchor="end" fill="#1a1a2a">3</text>
<line x1="590" y1="549.5" x2="592" y2="549.5" stroke="#a0a0a0"/>
<line x1="587" y1="530.5" x2="592" y2="530.5" stroke="#909090"/>
<text x="580.5" y="534.3" font-size="11.5" text-anchor="end" fill="#1a1a2a">4</text>
<line x1="590" y1="512.5" x2="592" y2="512.5" stroke="#a0a0a0"/>
<line x1="587" y1="493.5" x2="592" y2="493.5" stroke="#909090"/>
<text x="580.5" y="496.8" font-size="11.5" text-anchor="end" fill="#1a1a2a">5</text>
<line x1="590" y1="474.5" x2="592" y2="474.5" stroke="#a0a0a0"/>
<line x1="587" y1="455.5" x2="592" y2="455.5" stroke="#909090"/>
<text x="580.5" y="459.2" font-size="11.5" text-anchor="end" fill="#1a1a2a">6</text>
<line x1="590" y1="436.5" x2="592" y2="436.5" stroke="#a0a0a0"/>
<g clip-path="url(#bc)">
<rect x="601.6" y="497.0" width="28.6" height="183.4" fill="#fdc8b5" stroke="#e0b0a0" stroke-width="1"/>
<rect x="601.6" y="553.3" width="28.6" height="127.1" fill="#fea88a" stroke="#e0987c" stroke-width="1"/>
<rect x="601.6" y="647.1" width="28.6" height="33.3" fill="#fe8a62" stroke="#e07c58" stroke-width="1"/>
<rect x="601.6" y="662.1" width="28.6" height="18.3" fill="#fe6e3c" stroke="#e06838" stroke-width="1"/>
<rect x="648.6" y="534.5" width="28.6" height="145.9" fill="#fdc8b5" stroke="#e0b0a0" stroke-width="1"/>
<rect x="648.6" y="590.8" width="28.6" height="89.6" fill="#fea88a" stroke="#e0987c" stroke-width="1"/>
<rect x="648.6" y="662.1" width="28.6" height="18.3" fill="#fe8a62" stroke="#e07c58" stroke-width="1"/>
<rect x="648.6" y="669.6" width="28.6" height="10.8" fill="#fe6e3c" stroke="#e06838" stroke-width="1"/>
<rect x="695.7" y="527.0" width="28.6" height="153.4" fill="#fdc8b5" stroke="#e0b0a0" stroke-width="1"/>
<rect x="695.7" y="587.1" width="28.6" height="93.3" fill="#fea88a" stroke="#e0987c" stroke-width="1"/>
<rect x="695.7" y="647.1" width="28.6" height="33.3" fill="#fe8a62" stroke="#e07c58" stroke-width="1"/>
<rect x="695.7" y="650.9" width="28.6" height="29.5" fill="#fe6e3c" stroke="#e06838" stroke-width="1"/>
<rect x="742.7" y="508.3" width="28.6" height="172.1" fill="#fdc8b5" stroke="#e0b0a0" stroke-width="1"/>
<rect x="742.7" y="564.6" width="28.6" height="115.8" fill="#fea88a" stroke="#e0987c" stroke-width="1"/>
<rect x="742.7" y="650.9" width="28.6" height="29.5" fill="#fe8a62" stroke="#e07c58" stroke-width="1"/>
<rect x="742.7" y="658.4" width="28.6" height="22.0" fill="#fe6e3c" stroke="#e06838" stroke-width="1"/>
<rect x="789.7" y="482.0" width="28.6" height="198.4" fill="#fdc8b5" stroke="#e0b0a0" stroke-width="1"/>
<rect x="789.7" y="575.8" width="28.6" height="104.6" fill="#fea88a" stroke="#e0987c" stroke-width="1"/>
<rect x="789.7" y="654.6" width="28.6" height="25.8" fill="#fe8a62" stroke="#e07c58" stroke-width="1"/>
<rect x="789.7" y="654.6" width="28.6" height="25.8" fill="#fe6e3c" stroke="#e06838" stroke-width="1"/>
<rect x="836.8" y="564.6" width="28.6" height="115.8" fill="#fdc8b5" stroke="#e0b0a0" stroke-width="1"/>
<rect x="836.8" y="605.8" width="28.6" height="74.6" fill="#fea88a" stroke="#e0987c" stroke-width="1"/>
<rect x="836.8" y="662.1" width="28.6" height="18.3" fill="#fe8a62" stroke="#e07c58" stroke-width="1"/>
<rect x="836.8" y="669.6" width="28.6" height="10.8" fill="#fe6e3c" stroke="#e06838" stroke-width="1"/>
<rect x="883.6" y="485.7" width="28.6" height="194.7" fill="#fdc8b5" stroke="#e0b0a0" stroke-width="1"/>
<rect x="883.6" y="557.1" width="28.6" height="123.3" fill="#fea88a" stroke="#e0987c" stroke-width="1"/>
<rect x="883.6" y="650.9" width="28.6" height="29.5" fill="#fe8a62" stroke="#e07c58" stroke-width="1"/>
<rect x="883.6" y="658.4" width="28.6" height="22.0" fill="#fe6e3c" stroke="#e06838" stroke-width="1"/>
<rect x="930.8" y="444.5" width="28.6" height="235.9" fill="#fdc8b5" stroke="#e0b0a0" stroke-width="1"/>
<rect x="930.8" y="534.5" width="28.6" height="145.9" fill="#fea88a" stroke="#e0987c" stroke-width="1"/>
<rect x="930.8" y="639.6" width="28.6" height="40.8" fill="#fe8a62" stroke="#e07c58" stroke-width="1"/>
<rect x="930.8" y="665.9" width="28.6" height="14.5" fill="#fe6e3c" stroke="#e06838" stroke-width="1"/>
<line x1="615.9" y1="496.0" x2="623.2" y2="489.4" stroke="#b0b0b0"/>
<rect x="623.5" y="474.5" width="21" height="15" fill="#fff" stroke="#b0b0b0"/>
<text x="626.0" y="486.3" font-size="11" fill="#a8a8a8">4.9</text>
<line x1="662.9" y1="530.1" x2="669.3" y2="523.5" stroke="#b0b0b0"/>
<rect x="669.5" y="508.5" width="11" height="15" fill="#fff" stroke="#b0b0b0"/>
<text x="672.0" y="520.3" font-size="11" fill="#a8a8a8">4</text>
<line x1="710.0" y1="526.0" x2="717.2" y2="519.4" stroke="#b0b0b0"/>
<rect x="717.5" y="504.5" width="21" height="15" fill="#fff" stroke="#b0b0b0"/>
<text x="720.0" y="516.3" font-size="11" fill="#a8a8a8">4.1</text>
<line x1="757.0" y1="511.5" x2="763.5" y2="504.9" stroke="#b0b0b0"/>
<rect x="764.5" y="490.5" width="20" height="15" fill="#fff" stroke="#b0b0b0"/>
<text x="767.0" y="502.3" font-size="11" fill="#a8a8a8">4.5</text>
<line x1="804.0" y1="477.1" x2="811.4" y2="470.5" stroke="#b0b0b0"/>
<rect x="811.5" y="455.5" width="20" height="15" fill="#fff" stroke="#b0b0b0"/>
<text x="814.0" y="467.3" font-size="11" fill="#a8a8a8">5.4</text>
<line x1="851.1" y1="564.7" x2="857.2" y2="558.1" stroke="#b0b0b0"/>
<rect x="857.5" y="543.5" width="20" height="15" fill="#fff" stroke="#b0b0b0"/>
<text x="860.0" y="555.3" font-size="11" fill="#a8a8a8">3.1</text>
<line x1="897.9" y1="489.2" x2="905.5" y2="482.6" stroke="#b0b0b0"/>
<rect x="906.5" y="467.5" width="20" height="15" fill="#fff" stroke="#b0b0b0"/>
<text x="909.0" y="479.3" font-size="11" fill="#a8a8a8">5.1</text>
<line x1="945.1" y1="447.1" x2="951.3" y2="440.5" stroke="#b0b0b0"/>
<rect x="951.5" y="425.5" width="20" height="15" fill="#fff" stroke="#b0b0b0"/>
<text x="954.0" y="437.3" font-size="11" fill="#a8a8a8">6.2</text>
<rect x="575" y="467.5" width="20.5" height="15" fill="#fff" stroke="#b0b0b0"/>
</g>
<line x1="592.5" y1="420" x2="592.5" y2="691" stroke="#a8a8a8"/>
<line x1="968.5" y1="420" x2="968.5" y2="691" stroke="#a8a8a8"/>
<line x1="587" y1="680.5" x2="969" y2="680.5" stroke="#a8a8a8"/>
<rect x="592.5" y="681.5" width="376" height="9" fill="#fff" stroke="#c8c8c8"/>
<rect x="698" y="683" width="261" height="7" fill="#a0a0a0"/>
<path d="M826.5 685 V688 M828.5 685 V688 M830.5 685 V688" stroke="#fff" stroke-width="1"/>
<path d="M599 683.5 L596 686 L599 688.5" fill="none" stroke="#888" stroke-width="1"/>
<path d="M962 683.5 L965 686 L962 688.5" fill="none" stroke="#888" stroke-width="1"/>
<line x1="592" y1="690.5" x2="969" y2="690.5" stroke="#a8a8a8"/>
<line x1="616.5" y1="691" x2="616.5" y2="696" stroke="#909090"/>
<line x1="662.5" y1="691" x2="662.5" y2="696" stroke="#909090"/>
<line x1="710.5" y1="691" x2="710.5" y2="696" stroke="#909090"/>
<line x1="756.5" y1="691" x2="756.5" y2="696" stroke="#909090"/>
<line x1="804.5" y1="691" x2="804.5" y2="696" stroke="#909090"/>
<line x1="850.5" y1="691" x2="850.5" y2="696" stroke="#909090"/>
<line x1="898.5" y1="691" x2="898.5" y2="696" stroke="#909090"/>
<line x1="944.5" y1="691" x2="944.5" y2="696" stroke="#909090"/>
<line x1="597.5" y1="691" x2="597.5" y2="693" stroke="#b0b0b0"/>
<line x1="607.5" y1="691" x2="607.5" y2="693" stroke="#b0b0b0"/>
<line x1="626.5" y1="691" x2="626.5" y2="693" stroke="#b0b0b0"/>
<line x1="635.5" y1="691" x2="635.5" y2="693" stroke="#b0b0b0"/>
<line x1="644.5" y1="691" x2="644.5" y2="693" stroke="#b0b0b0"/>
<line x1="654.5" y1="691" x2="654.5" y2="693" stroke="#b0b0b0"/>
<line x1="672.5" y1="691" x2="672.5" y2="693" stroke="#b0b0b0"/>
<line x1="682.5" y1="691" x2="682.5" y2="693" stroke="#b0b0b0"/>
<line x1="691.5" y1="691" x2="691.5" y2="693" stroke="#b0b0b0"/>
<line x1="701.5" y1="691" x2="701.5" y2="693" stroke="#b0b0b0"/>
<line x1="719.5" y1="691" x2="719.5" y2="693" stroke="#b0b0b0"/>
<line x1="729.5" y1="691" x2="729.5" y2="693" stroke="#b0b0b0"/>
<line x1="738.5" y1="691" x2="738.5" y2="693" stroke="#b0b0b0"/>
<line x1="747.5" y1="691" x2="747.5" y2="693" stroke="#b0b0b0"/>
<line x1="766.5" y1="691" x2="766.5" y2="693" stroke="#b0b0b0"/>
<line x1="776.5" y1="691" x2="776.5" y2="693" stroke="#b0b0b0"/>
<line x1="785.5" y1="691" x2="785.5" y2="693" stroke="#b0b0b0"/>
<line x1="794.5" y1="691" x2="794.5" y2="693" stroke="#b0b0b0"/>
<line x1="813.5" y1="691" x2="813.5" y2="693" stroke="#b0b0b0"/>
<line x1="822.5" y1="691" x2="822.5" y2="693" stroke="#b0b0b0"/>
<line x1="832.5" y1="691" x2="832.5" y2="693" stroke="#b0b0b0"/>
<line x1="841.5" y1="691" x2="841.5" y2="693" stroke="#b0b0b0"/>
<line x1="860.5" y1="691" x2="860.5" y2="693" stroke="#b0b0b0"/>
<line x1="869.5" y1="691" x2="869.5" y2="693" stroke="#b0b0b0"/>
<line x1="879.5" y1="691" x2="879.5" y2="693" stroke="#b0b0b0"/>
<line x1="888.5" y1="691" x2="888.5" y2="693" stroke="#b0b0b0"/>
<line x1="907.5" y1="691" x2="907.5" y2="693" stroke="#b0b0b0"/>
<line x1="916.5" y1="691" x2="916.5" y2="693" stroke="#b0b0b0"/>
<line x1="925.5" y1="691" x2="925.5" y2="693" stroke="#b0b0b0"/>
<line x1="935.5" y1="691" x2="935.5" y2="693" stroke="#b0b0b0"/>
<line x1="954.5" y1="691" x2="954.5" y2="693" stroke="#b0b0b0"/>
<line x1="963.5" y1="691" x2="963.5" y2="693" stroke="#b0b0b0"/>
<text x="616.2" y="710" font-size="11" letter-spacing="-0.25" text-anchor="middle" fill="#1a1a2a">201604</text>
<text x="662.2" y="710" font-size="11" letter-spacing="-0.25" text-anchor="middle" fill="#1a1a2a">201605</text>
<text x="710.4" y="710" font-size="11" letter-spacing="-0.25" text-anchor="middle" fill="#1a1a2a">201606</text>
<text x="756.3" y="710" font-size="11" letter-spacing="-0.25" text-anchor="middle" fill="#1a1a2a">201607</text>
<text x="804.2" y="710" font-size="11" letter-spacing="-0.25" text-anchor="middle" fill="#1a1a2a">201608</text>
<text x="850.2" y="710" font-size="11" letter-spacing="-0.25" text-anchor="middle" fill="#1a1a2a">201609</text>
<text x="898.5" y="710" font-size="11" letter-spacing="-0.25" text-anchor="middle" fill="#1a1a2a">201610</text>
<text x="944.3" y="710" font-size="11" letter-spacing="-0.25" text-anchor="middle" fill="#1a1a2a">201611</text>
</svg>
<!--/CHART-->

<!-- status bar -->
<div style="position:absolute;left:0;top:726px;width:992px;height:24px;background:#0072c6"></div>
<div class="a" style="left:9px;top:732px;color:#fff">番茄工作: 00:18</div>
<div class="a" style="left:101px;top:732px;color:#fff">(</div><div class="a" style="left:107px;top:732px;color:#fff">工作</div><div class="a" style="left:130px;top:732px;color:#fff">)</div>
<div class="a" style="left:147px;top:732px;color:#fff">上网控制: 00:00:00</div>
<div class="a" style="left:257px;top:732px;color:#fff">(</div><div class="a" style="left:262px;top:732px;color:#fff">正常</div><div class="a" style="left:286px;top:732px;color:#fff">)</div>
<svg style="left:860px;top:726px" width="132" height="24">
  <defs><linearGradient id="mk" x1="0" y1="0" x2="1" y2="1"><stop offset="0" stop-color="#fff8c8"/><stop offset="0.6" stop-color="#f4d030"/><stop offset="1" stop-color="#e0a010"/></linearGradient>
  <linearGradient id="lk" x1="0" y1="0" x2="0" y2="1"><stop offset="0" stop-color="#ffe8a0"/><stop offset="1" stop-color="#f0a020"/></linearGradient></defs>
  <circle cx="17" cy="9.3" r="4.8" fill="#d6d6d6"/>
  <path d="M14.6 12 L19.4 12 L18.8 18.5 L15.2 18.5 Z" fill="#d6d6d6"/>
  <path d="M37.8 7.8 Q43 8.5 48.5 4.6 Q51.5 8 51 13 Q50 18.5 45 19 Q40 18.5 38.5 13.5 Q37.5 10 37.8 7.8 Z" fill="url(#mk)" stroke="#9a5a10" stroke-width="0.9"/>
  <path d="M40.5 11 L42.8 10.2 M46.2 10.3 L48.8 8.8 M42.3 15.2 Q45 16.3 48 14.5" fill="none" stroke="#8a5010" stroke-width="0.9"/>
  <path d="M69.8 10.5 V8.5 A3.6 3.6 0 0 1 77 8.5 V10.5" fill="none" stroke="#c8c8c8" stroke-width="1.8"/>
  <rect x="67.3" y="10.5" width="11.5" height="8" rx="0.8" fill="url(#lk)" stroke="#c07818" stroke-width="0.8"/>
  <rect x="72.3" y="12.3" width="1.4" height="4.6" fill="#604020"/>
  <g fill="#f0d8c0"><rect x="128" y="13" width="2" height="2"/><rect x="125" y="16" width="2" height="2"/><rect x="128" y="16" width="2" height="2"/><rect x="122" y="19" width="2" height="2"/><rect x="125" y="19" width="2" height="2"/><rect x="128" y="19" width="2" height="2"/></g>
</svg>
<div class="a" style="left:946px;top:730px;color:#fff;font-size:13.5px;line-height:16px;letter-spacing:0.4px">(3)</div>
</body></html>
